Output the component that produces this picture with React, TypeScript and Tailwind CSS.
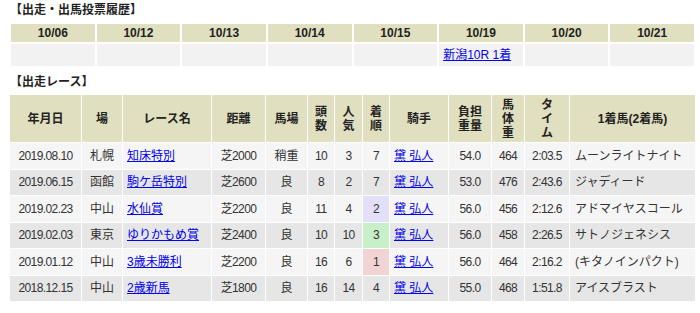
import React from 'react';

const font = {
  fontFamily: "'Liberation Sans', 'Noto Sans CJK JP', sans-serif",
};

const dates = ['10/06', '10/12', '10/13', '10/14', '10/15', '10/19', '10/20', '10/21'];

type Race = {
  date: string;
  place: string;
  name: string;
  dist: string;
  cond: string;
  heads: string;
  pop: string;
  rank: string;
  jockey: string;
  weight: string;
  body: string;
  time: string;
  winner: string;
  hl?: string;
};

const races: Race[] = [
  { date: '2019.08.10', place: '札幌', name: '知床特別', dist: '芝2000', cond: '稍重', heads: '10', pop: '3', rank: '7', jockey: '黛 弘人', weight: '54.0', body: '464', time: '2:03.5', winner: 'ムーンライトナイト' },
  { date: '2019.06.15', place: '函館', name: '駒ケ岳特別', dist: '芝2600', cond: '良', heads: '8', pop: '2', rank: '7', jockey: '黛 弘人', weight: '53.0', body: '476', time: '2:43.6', winner: 'ジャディード' },
  { date: '2019.02.23', place: '中山', name: '水仙賞', dist: '芝2200', cond: '良', heads: '11', pop: '4', rank: '2', jockey: '黛 弘人', weight: '56.0', body: '456', time: '2:12.6', winner: 'アドマイヤスコール', hl: 'bg-[#e3dff8]' },
  { date: '2019.02.03', place: '東京', name: 'ゆりかもめ賞', dist: '芝2400', cond: '良', heads: '10', pop: '10', rank: '3', jockey: '黛 弘人', weight: '56.0', body: '458', time: '2:26.5', winner: 'サトノジェネシス', hl: 'bg-[#c8f0c8]' },
  { date: '2019.01.12', place: '中山', name: '3歳未勝利', dist: '芝2200', cond: '良', heads: '16', pop: '6', rank: '1', jockey: '黛 弘人', weight: '56.0', body: '464', time: '2:16.2', winner: '(キタノインパクト)', hl: 'bg-[#f2d3d3]' },
  { date: '2018.12.15', place: '中山', name: '2歳新馬', dist: '芝1800', cond: '良', heads: '16', pop: '14', rank: '4', jockey: '黛 弘人', weight: '55.0', body: '468', time: '1:51.8', winner: 'アイスブラスト' },
];

const th = 'border border-white bg-[#e0dfc0] font-bold text-[#222] text-center leading-[14px] p-0';
const td = 'border border-white p-0 text-center';
// numeric cells: the original font has narrow digits
const num = td + ' tracking-[-0.6px]';

export default function App() {
  return (
    <div className="w-[700px] h-[313px] bg-white overflow-hidden text-[12px] text-[#333]" style={font}>
      <div className="mt-[2px] ml-[10px] h-[16px] leading-[16px] font-bold text-[#222]">【出走・出馬投票履歴】</div>

      <div className="mt-[6px] ml-[11px] w-[683px] grid grid-cols-8 gap-[2px]">
        {dates.map((d) => (
          <div key={d} className="h-[18px] bg-[#e0dfc0] font-bold text-[#222] text-center leading-[18px]">{d}</div>
        ))}
        {dates.map((d) => (
          <div key={d + 'b'} className="h-[22px] bg-[#f2f2f2] leading-[22px] pl-[4px]">
            {d === '10/19' && <a className="text-[#0000ee] underline">新潟10R 1着</a>}
          </div>
        ))}
      </div>

      <div className="mt-[8px] ml-[10px] h-[16px] leading-[16px] font-bold text-[#222]">【出走レース】</div>

      <table className="mt-[4px] ml-[9px] w-[687px] border-collapse table-fixed">
        <colgroup>
          <col className="w-[72px]" />
          <col className="w-[41px]" />
          <col className="w-[89px]" />
          <col className="w-[54px]" />
          <col className="w-[42px]" />
          <col className="w-[27px]" />
          <col className="w-[28px]" />
          <col className="w-[27px]" />
          <col className="w-[59px]" />
          <col className="w-[43px]" />
          <col className="w-[33px]" />
          <col className="w-[45px]" />
          <col />
        </colgroup>
        <thead>
          <tr className="h-[48px]">
            <th className={th}>年月日</th>
            <th className={th}>場</th>
            <th className={th}>レース名</th>
            <th className={th}>距離</th>
            <th className={th}>馬場</th>
            <th className={th}>頭<br />数</th>
            <th className={th}>人<br />気</th>
            <th className={th}>着<br />順</th>
            <th className={th}>騎手</th>
            <th className={th}>負担<br />重量</th>
            <th className={th}>馬<br />体<br />重</th>
            <th className={th}>タ<br />イ<br />ム</th>
            <th className={th}>1着馬(2着馬)</th>
          </tr>
        </thead>
        <tbody>
          {races.map((r, i) => (
            <tr key={r.date} className={(i % 2 === 0 ? 'bg-[#f5f5f5]' : 'bg-[#e6e6e6]') + ' h-[26.5px]'}>
              <td className={num}>{r.date}</td>
              <td className={td}>{r.place}</td>
              <td className={td + ' text-left pl-[4px]'}>
                <a className="text-[#0000ee] underline">{r.name}</a>
              </td>
              <td className={num}>{r.dist}</td>
              <td className={td}>{r.cond}</td>
              <td className={num}>{r.heads}</td>
              <td className={num}>{r.pop}</td>
              <td className={num + ' ' + (r.hl ?? '')}>{r.rank}</td>
              <td className={td + ' text-left pl-[4px]'}>
                <a className="text-[#0000ee] underline">{r.jockey}</a>
              </td>
              <td className={num}>{r.weight}</td>
              <td className={num}>{r.body}</td>
              <td className={num}>{r.time}</td>
              <td className={td + ' text-left pl-[5px]'}>{r.winner}</td>
            </tr>
          ))}
        </tbody>
      </table>
    </div>
  );
}
